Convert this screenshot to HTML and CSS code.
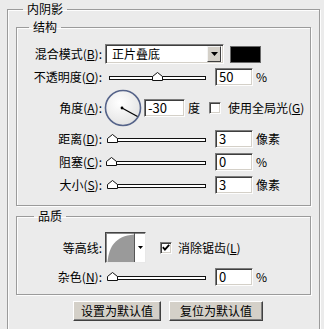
FILE: index.html
```html
<!DOCTYPE html>
<html>
<head>
<meta charset="utf-8">
<link rel="stylesheet" href="styles.css">
</head>
<body>
<fieldset class="group outer">
  <legend class="legend legend-outer">内阴影</legend>

  <fieldset class="group inner">
    <legend class="legend">结构</legend>

    <div class="row row-blend">
      <span class="lbl">混合模式(<u>B</u>):</span>
      <div class="select">
        <span class="select-text">正片叠底</span>
        <span class="select-btn"><svg width="7" height="4" viewBox="0 0 7 4"><path d="M0 0H7L3.5 4Z" fill="#000"/></svg></span>
      </div>
      <div class="swatch"></div>
    </div>

    <div class="row row-opacity">
      <span class="lbl">不透明度(<u>O</u>):</span>
      <div class="slider"><div class="track"></div><span class="thumb" style="left:48px"><svg width="11" height="9" viewBox="0 0 11 9"><path d="M0.5 8.5V4.5L5.5 0.5L10.5 4.5V8.5Z" fill="#fff" stroke="#111"/></svg></span></div>
      <div class="field">50</div>
      <span class="unit">%</span>
    </div>

    <div class="row row-angle">
      <span class="lbl">角度(<u>A</u>):</span>
      <svg class="dial" width="38" height="38" viewBox="0 0 38 38">
        <defs>
          <radialGradient id="dg" cx="40%" cy="35%" r="70%">
            <stop offset="0" stop-color="#ffffff"/>
            <stop offset="1" stop-color="#e2e2e2"/>
          </radialGradient>
        </defs>
        <circle cx="19" cy="19" r="17.5" fill="url(#dg)" stroke="#56648a" stroke-width="1.6"/>
        <line x1="18" y1="19" x2="33.5" y2="27.5" stroke="#000" stroke-width="1.3"/>
        <circle cx="18" cy="19" r="1.4" fill="#000"/>
      </svg>
      <div class="field field-angle">-30</div>
      <span class="unit unit-deg">度</span>
      <span class="check"></span>
      <span class="check-text">使用全局光(<u>G</u>)</span>
    </div>

    <div class="row row-slider row-first">
      <span class="lbl">距离(<u>D</u>):</span>
      <div class="slider"><div class="track"></div><span class="thumb" style="left:3px"><svg width="11" height="9" viewBox="0 0 11 9"><path d="M0.5 8.5V4.5L5.5 0.5L10.5 4.5V8.5Z" fill="#fff" stroke="#111"/></svg></span></div>
      <div class="field">3</div>
      <span class="unit">像素</span>
    </div>

    <div class="row row-slider">
      <span class="lbl">阻塞(<u>C</u>):</span>
      <div class="slider"><div class="track"></div><span class="thumb" style="left:2px"><svg width="11" height="9" viewBox="0 0 11 9"><path d="M0.5 8.5V4.5L5.5 0.5L10.5 4.5V8.5Z" fill="#fff" stroke="#111"/></svg></span></div>
      <div class="field">0</div>
      <span class="unit">%</span>
    </div>

    <div class="row row-slider">
      <span class="lbl">大小(<u>S</u>):</span>
      <div class="slider"><div class="track"></div><span class="thumb" style="left:3px"><svg width="11" height="9" viewBox="0 0 11 9"><path d="M0.5 8.5V4.5L5.5 0.5L10.5 4.5V8.5Z" fill="#fff" stroke="#111"/></svg></span></div>
      <div class="field">3</div>
      <span class="unit">像素</span>
    </div>
  </fieldset>

  <fieldset class="group quality">
    <legend class="legend legend-quality">品质</legend>

    <div class="row row-contour">
      <span class="lbl">等高线:</span>
      <div class="contour">
        <span class="contour-preview"><svg width="28" height="29" viewBox="0 0 28 29"><path d="M1.5 29C3 14 9 3 28 1.5V29Z" fill="#9a9a9a"/></svg></span>
        <span class="contour-btn"><svg width="5" height="3" viewBox="0 0 5 3"><path d="M0 0H5L2.5 3Z" fill="#000"/></svg></span>
      </div>
      <span class="check check-on"><svg width="11" height="11" viewBox="0 0 11 11"><path d="M2 5.2L4.3 7.8L9 2.5" fill="none" stroke="#000" stroke-width="2"/></svg></span>
      <span class="check-text check-text-aa">消除锯齿(<u>L</u>)</span>
    </div>

    <div class="row row-noise">
      <span class="lbl">杂色(<u>N</u>):</span>
      <div class="slider"><div class="track"></div><span class="thumb" style="left:3px"><svg width="11" height="9" viewBox="0 0 11 9"><path d="M0.5 8.5V4.5L5.5 0.5L10.5 4.5V8.5Z" fill="#fff" stroke="#111"/></svg></span></div>
      <div class="field">0</div>
      <span class="unit">%</span>
    </div>
  </fieldset>

  <div class="buttons">
    <button class="btn btn-set">设置为默认值</button>
    <button class="btn btn-reset">复位为默认值</button>
  </div>
</fieldset>
</body>
</html>
```

FILE: styles.css
```css
html, body {
  margin: 0;
  padding: 0;
  overflow: hidden;
  background: #ebebeb;
}

body {
  font-family: "Noto Sans CJK SC", "Liberation Sans", sans-serif;
  font-size: 12px;
  color: #000;
  width: 324px;
  height: 329px;
}

u {
  text-decoration: underline;
  text-underline-offset: 1px;
}

.group {
  margin: 0;
  padding: 0;
  border: 1px solid #9b9b9b;
  box-shadow: inset 1px 1px 0 #fdfdfd, 1px 1px 0 #fdfdfd;
  min-width: 0;
}

.outer {
  margin-left: 7px;
  width: 311px;
  padding-bottom: 40px;
}

.legend {
  margin-left: 12px;
  padding: 0 4px;
  line-height: 18px;
  height: 18px;
}

.legend-outer {
  margin-left: 15px;
}

.inner {
  margin: 0 8px 0 8px;
  padding: 0 0 11px 0;
}

.quality {
  margin: 1px 8px 0 8px;
  padding: 0 0 8px 0;
}

.legend-quality {
  margin-left: 17px;
}

.row {
  display: flex;
  align-items: center;
}

.lbl {
  width: 85px;
  flex: none;
  text-align: right;
  white-space: nowrap;
  line-height: 16px;
}

.row-blend {
  height: 20px;
  margin-top: 8px;
}

.row-opacity {
  height: 18px;
  margin-top: 4px;
}

.row-angle {
  height: 38px;
  margin-top: 3px;
}

.row-slider {
  height: 18px;
  margin-top: 5px;
}

.row-first {
  margin-top: 3px;
}

.row-contour {
  height: 31px;
  margin-top: 7px;
}

.row-noise {
  height: 18px;
  margin-top: 5px;
}

/* select */
.select {
  margin-left: 3px;
  width: 119px;
  height: 20px;
  box-sizing: border-box;
  background: #fff;
  border: 1px solid;
  border-color: #7c7c7c #fdfdfd #fdfdfd #7c7c7c;
  box-shadow: inset 1px 1px 0 #3e3e3e, inset -1px -1px 0 #d4d0c8;
  display: flex;
  align-items: center;
  justify-content: space-between;
  padding: 2px;
}

.select-text {
  padding-left: 4px;
  line-height: 16px;
}

.select-btn {
  width: 14px;
  height: 16px;
  box-sizing: border-box;
  background: #d4d0c8;
  border: 1px solid;
  border-color: #f4f4f4 #404040 #404040 #f4f4f4;
  display: flex;
  align-items: center;
  justify-content: center;
}

.swatch {
  margin-left: 6px;
  width: 31px;
  height: 17px;
  box-sizing: border-box;
  background: #000;
  border: 1px solid #6a6a6a;
}

/* slider */
.slider {
  position: relative;
  margin-left: 2px;
  width: 106px;
  height: 18px;
  flex: none;
}

.track {
  position: absolute;
  left: 5px;
  right: 4px;
  top: 8px;
  height: 4px;
  box-sizing: border-box;
  background: #fff;
  border: 1px solid #111;
}

.thumb {
  position: absolute;
  top: 4px;
  width: 11px;
  height: 9px;
  display: block;
}

.thumb svg {
  display: block;
}

/* text field */
.field {
  margin-left: 5px;
  width: 38px;
  height: 18px;
  box-sizing: border-box;
  background: #fff;
  border: 1px solid;
  border-color: #7c7c7c #fdfdfd #fdfdfd #7c7c7c;
  box-shadow: inset 1px 1px 0 #3e3e3e, inset -1px -1px 0 #d4d0c8;
  padding-left: 3px;
  line-height: 16px;
  font-size: 13px;
  flex: none;
}

.unit {
  margin-left: 3px;
  line-height: 16px;
}

/* angle row */
.dial {
  margin-left: 2px;
  flex: none;
  display: block;
}

.field-angle {
  margin-left: 2px;
  width: 41px;
}

.unit-deg {
  margin-left: 3px;
}

.check {
  margin-left: 9px;
  width: 12px;
  height: 12px;
  box-sizing: border-box;
  background: #fff;
  border: 1px solid;
  border-color: #7c7c7c #fdfdfd #fdfdfd #7c7c7c;
  box-shadow: inset 1px 1px 0 #3e3e3e, inset -1px -1px 0 #d4d0c8;
  flex: none;
  display: flex;
  align-items: center;
  justify-content: center;
}

.check svg {
  display: block;
}

.check-text {
  margin-left: 7px;
  white-space: nowrap;
  line-height: 16px;
}

/* contour */
.contour {
  margin-left: 3px;
  width: 41px;
  height: 31px;
  box-sizing: border-box;
  background: #fff;
  border: 1px solid;
  border-color: #444 #e8e8e8 #e8e8e8 #444;
  box-shadow: inset 1px 1px 0 #888;
  display: flex;
}

.contour-preview {
  width: 28px;
  border-right: 1px solid #555;
  display: flex;
  align-items: flex-end;
  overflow: hidden;
}

.contour-preview svg {
  display: block;
}

.contour-btn {
  flex: 1;
  display: flex;
  align-items: center;
  justify-content: center;
}

.check-on {
  margin-left: 14px;
}

.check-text-aa {
  margin-left: 6px;
}

/* buttons */
.buttons {
  display: flex;
  gap: 8px;
  margin-top: 6px;
  margin-left: 65px;
}

.btn {
  height: 20px;
  box-sizing: border-box;
  margin: 0;
  padding: 0;
  font-family: "Noto Sans CJK SC", "Liberation Sans", sans-serif;
  font-size: 12px;
  line-height: 16px;
  color: #000;
  background: #d4d0c8;
  border: 1px solid;
  border-color: #fff #404040 #404040 #fff;
  box-shadow: inset -1px -1px 0 #808080;
}

.btn-set {
  width: 88px;
}

.btn-reset {
  width: 94px;
}
```
